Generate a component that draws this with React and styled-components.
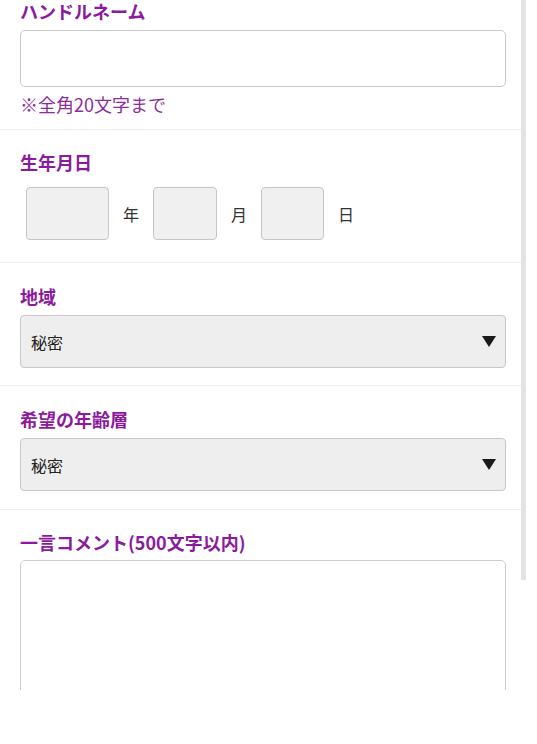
import React from "react";
import styled, { createGlobalStyle } from "styled-components";

const Global = createGlobalStyle`
  html, body { margin: 0; padding: 0; background: #fff; }
  body { font-family: "Noto Sans CJK JP", "Noto Sans", sans-serif; color: #333; }
`;

const Viewport = styled.div`
  position: relative;
  width: 537px;
  height: 690px;
  overflow: hidden;
  background: #fff;
`;

const Scroller = styled.div`
  width: 521px;
  margin-top: -21px;
`;

const Section = styled.section`
  padding: ${(p) => p.$pt || 20}px 15px ${(p) => p.$pb || 18}px 20px;
  border-bottom: ${(p) => (p.$last ? "none" : "1px solid #ececec")};
`;

const Label = styled.h3`
  margin: 0 0 ${(p) => p.$gap || 7}px;
  font-size: 18px;
  line-height: 24px;
  font-weight: 700;
  color: #8c1a9e;
`;

const TextInput = styled.div`
  box-sizing: border-box;
  height: 57px;
  border: 1px solid #c9c9c9;
  border-radius: 5px;
  background: #fff;
`;

const Note = styled.p`
  margin: 5px 0 0;
  font-size: 18px;
  line-height: 24px;
  color: #8d2c9e;
`;

const DateRow = styled.div`
  display: flex;
  align-items: center;
  padding-left: 6px;
`;

const DateBox = styled.div`
  box-sizing: border-box;
  width: ${(p) => p.$w}px;
  height: 53px;
  border: 1px solid #c6c6c6;
  border-radius: 4px;
  background: #f0f0f0;
`;

const Unit = styled.span`
  margin: 0 14px;
  font-size: 16px;
  line-height: 20px;
  color: #333;
`;

const Select = styled.div`
  box-sizing: border-box;
  height: ${(p) => p.$h || 52}px;
  display: flex;
  align-items: center;
  justify-content: space-between;
  padding: 0 9px 0 10px;
  border: 1px solid #c8c8c8;
  border-radius: 4px;
  background: #eeeeee;
  font-size: 16px;
  color: #222;
`;

const Arrow = styled.span`
  width: 0;
  height: 0;
  border-left: 7px solid transparent;
  border-right: 7px solid transparent;
  border-top: 11px solid #1a1a1a;
`;

const TextArea = styled.div`
  box-sizing: border-box;
  height: 200px;
  border: 1px solid #cdcdcd;
  border-radius: 5px;
  background: #fff;
`;

const ScrollThumb = styled.div`
  position: absolute;
  top: 0;
  left: 521px;
  width: 5px;
  height: 580px;
  background: #e3e3e3;
`;

export default function App() {
  return (
    <>
      <Global />
      <Viewport>
        <Scroller>
          <Section $pt={20} $pb={13}>
            <Label>ハンドルネーム</Label>
            <TextInput />
            <Note>※全角20文字まで</Note>
          </Section>
          <Section $pt={20} $pb={22}>
            <Label $gap={13}>生年月日</Label>
            <DateRow>
              <DateBox $w={83} />
              <Unit>年</Unit>
              <DateBox $w={64} />
              <Unit>月</Unit>
              <DateBox $w={63} />
              <Unit>日</Unit>
            </DateRow>
          </Section>
          <Section $pt={21} $pb={17}>
            <Label>地域</Label>
            <Select $h={53}>
              <span>秘密</span>
              <Arrow />
            </Select>
          </Section>
          <Section $pt={21} $pb={18}>
            <Label>希望の年齢層</Label>
            <Select $h={53}>
              <span>秘密</span>
              <Arrow />
            </Select>
          </Section>
          <Section $pt={20} $pb={20} $last>
            <Label $gap={6}>一言コメント(500文字以内)</Label>
            <TextArea />
          </Section>
        </Scroller>
        <ScrollThumb />
      </Viewport>
    </>
  );
}
